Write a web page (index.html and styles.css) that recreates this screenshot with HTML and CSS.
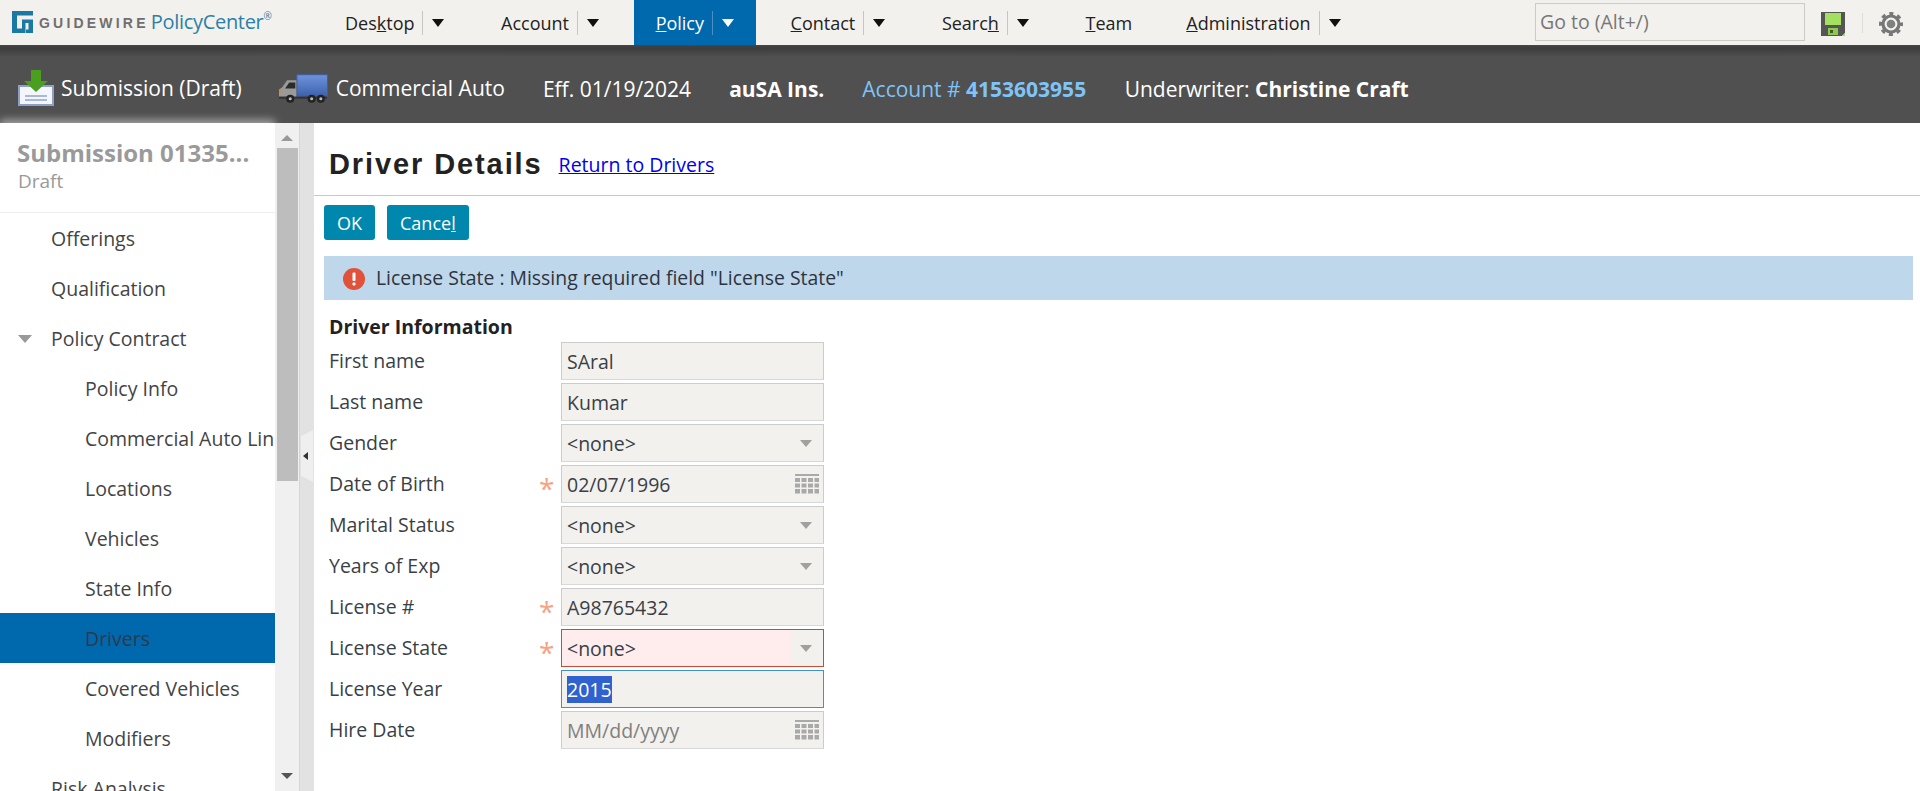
FILE: index.html
```html
<!DOCTYPE html>
<html lang="en">
<head>
<meta charset="utf-8">
<title>Driver Details</title>
<link rel="stylesheet" href="styles.css">
</head>
<body>
<header class="topbar">
  <div class="logo">
    <svg class="logo-mark" viewBox="0 0 21 22" width="21" height="22"><path fill="#1a7aa3" d="M0 0h21v4.500H5v13h5V8.500h11V22h-7v-3.500h2.500v-6.500h-3V22H0z"/></svg>
    <span class="logo-word">GUIDEWIRE</span>
    <span class="logo-product">PolicyCenter<sup class="logo-reg">&#174;</sup></span>
  </div>
  <nav class="nav">
    <div class="nav-item"><span class="nav-label">Des<u>k</u>top</span><span class="nav-sep"></span><span class="nav-caret"></span></div>
    <div class="nav-item"><span class="nav-label">Account</span><span class="nav-sep"></span><span class="nav-caret"></span></div>
    <div class="nav-item is-active"><span class="nav-label"><u>P</u>olicy</span><span class="nav-sep"></span><span class="nav-caret"></span></div>
    <div class="nav-item"><span class="nav-label"><u>C</u>ontact</span><span class="nav-sep"></span><span class="nav-caret"></span></div>
    <div class="nav-item"><span class="nav-label">Searc<u>h</u></span><span class="nav-sep"></span><span class="nav-caret"></span></div>
    <div class="nav-item nav-team"><span class="nav-label"><u>T</u>eam</span></div>
    <div class="nav-item"><span class="nav-label"><u>A</u>dministration</span><span class="nav-sep"></span><span class="nav-caret"></span></div>
  </nav>
  <div class="tools">
    <div class="goto">Go to (Alt+/)</div>
    <svg class="save" viewBox="0 0 24 24" width="24" height="24"><path fill="#555" d="M0 0h24v21l-3 3H0z"/><path fill="#a4e060" d="M21 24l3-3v3z"/><rect x="4" y="1" width="16" height="12" fill="#a4e060"/><rect x="7" y="16" width="10" height="7" fill="#8cc850"/><rect x="9" y="18" width="3" height="3" fill="#44582c"/></svg>
    <span class="tool-sep"></span>
    <svg class="gear" viewBox="0 0 24 24" width="24" height="24"><circle cx="12" cy="12" r="10.500" fill="none" stroke="#777" stroke-width="3" stroke-dasharray="4.120 4.130" stroke-dashoffset="2.060"/><circle cx="12" cy="12" r="8" fill="none" stroke="#777" stroke-width="3.200"/><circle cx="12" cy="12" r="4.300" fill="#808080"/></svg>
  </div>
</header>
<section class="infobar">
  <div class="info-item info-sub">
    <svg class="sub-icon" viewBox="0 0 36 36" width="36" height="36"><path fill="#f4f6fb" stroke="#8d9fc4" stroke-width="2" d="M1 16h34v19H1z"/><path fill="#4aa01e" d="M13 0h10v11h7L18 22 6 11h7z"/><path stroke="#a9b8d6" stroke-width="2" d="M7 26h22M7 30h22"/></svg>
    <span class="sub-text">Submission (Draft)</span>
  </div>
  <div class="info-item info-auto">
    <svg class="truck" viewBox="0 0 48 28" width="49" height="29"><defs><linearGradient id="box" x1="0" y1="0" x2="0" y2="1"><stop offset="0" stop-color="#6f94dc"/><stop offset="1" stop-color="#3d61ae"/></linearGradient></defs><rect x="17.500" y="0.500" width="30" height="21" fill="url(#box)" stroke="#3f5f9f"/><path fill="#9a9a9a" d="M17 6H8l-5 7-3 2v7h17z"/><path fill="#2b2b2b" d="M10 8h6v6H6z"/><rect x="0" y="15" width="2" height="3" fill="#d98a2b"/><rect y="22" x="0" width="47" height="2" fill="#333"/><circle cx="11" cy="24" r="4" fill="#222"/><circle cx="11" cy="24" r="1.500" fill="#bbb"/><circle cx="32" cy="24" r="4" fill="#222"/><circle cx="32" cy="24" r="1.500" fill="#bbb"/><circle cx="41" cy="24" r="4" fill="#222"/><circle cx="41" cy="24" r="1.500" fill="#bbb"/></svg>
    <span class="auto-text">Commercial Auto</span>
  </div>
  <div class="info-item info-eff">Eff. 01/19/2024</div>
  <div class="info-item info-org"><b>auSA Ins.</b></div>
  <div class="info-item info-acct">Account # <b>4153603955</b></div>
  <div class="info-item info-uw">Underwriter: <b>Christine Craft</b></div>
</section>
<main class="main">
  <aside class="sidebar">
    <div class="side-head">
      <div class="side-title">Submission 01335...</div>
      <div class="side-sub">Draft</div>
    </div>
    <ul class="side-list">
      <li class="side-item">Offerings</li>
      <li class="side-item">Qualification</li>
      <li class="side-item has-caret">Policy Contract</li>
      <li class="side-item sub">Policy Info</li>
      <li class="side-item sub">Commercial Auto Line</li>
      <li class="side-item sub">Locations</li>
      <li class="side-item sub">Vehicles</li>
      <li class="side-item sub">State Info</li>
      <li class="side-item sub is-current">Drivers</li>
      <li class="side-item sub">Covered Vehicles</li>
      <li class="side-item sub">Modifiers</li>
      <li class="side-item">Risk Analysis</li>
    </ul>
  </aside>
  <div class="scrollbar">
    <span class="sb-up"></span>
    <span class="sb-thumb"></span>
    <span class="sb-down"></span>
  </div>
  <div class="splitter"><span class="split-handle"></span><span class="split-arrow"></span></div>
  <div class="content">
    <div class="title-row">
      <h1 class="page-title">Driver Details</h1>
      <a class="return-link" href="#">Return to Drivers</a>
    </div>
    <div class="actions">
      <button class="btn" type="button">OK</button>
      <button class="btn" type="button">Cance<u>l</u></button>
    </div>
    <div class="alert">
      <svg class="alert-icon" viewBox="0 0 22 22" width="22" height="22"><circle cx="11" cy="11" r="11" fill="#e0523a"/><rect x="9.500" y="4.500" width="3" height="8.500" rx="1" fill="#fff"/><rect x="9.500" y="14.500" width="3" height="3" rx="1" fill="#fff"/></svg>
      <span class="alert-text">License State : Missing required field "License State"</span>
    </div>
    <h2 class="section-title">Driver Information</h2>
    <div class="form">
      <div class="row"><span class="lbl">First name</span><span class="req"></span><div class="field"><span>SAral</span></div></div>
      <div class="row"><span class="lbl">Last name</span><span class="req"></span><div class="field"><span>Kumar</span></div></div>
      <div class="row"><span class="lbl">Gender</span><span class="req"></span><div class="field"><span>&lt;none&gt;</span><span class="sel-caret"></span></div></div>
      <div class="row"><span class="lbl">Date of Birth</span><span class="req">*</span><div class="field"><span>02/07/1996</span><svg class="cal" viewBox="0 0 24 21" width="24" height="21"><path fill="#a9a9a9" d="M0 0h24v2H0zM0 4h5v4H0zM6.500 4h5v4h-5zM13 4h5v4h-5zM19.500 4H24v4h-4.500zM0 9.500h5v4H0zM6.500 9.500h5v4h-5zM13 9.500h5v4h-5zM19.500 9.500H24v4h-4.500zM0 15h5v4.500H0zM6.500 15h5v4.500h-5zM13 15h5v4.500h-5zM19.500 15H24v4.500h-4.500z"/></svg></div></div>
      <div class="row"><span class="lbl">Marital Status</span><span class="req"></span><div class="field"><span>&lt;none&gt;</span><span class="sel-caret"></span></div></div>
      <div class="row"><span class="lbl">Years of Exp</span><span class="req"></span><div class="field"><span>&lt;none&gt;</span><span class="sel-caret"></span></div></div>
      <div class="row"><span class="lbl">License #</span><span class="req">*</span><div class="field"><span>A98765432</span></div></div>
      <div class="row"><span class="lbl">License State</span><span class="req">*</span><div class="field is-error"><span class="err-fill">&lt;none&gt;</span><span class="sel-caret"></span></div></div>
      <div class="row"><span class="lbl">License Year</span><span class="req"></span><div class="field is-focus"><span class="selected">2015</span></div></div>
      <div class="row"><span class="lbl">Hire Date</span><span class="req"></span><div class="field is-empty"><span>MM/dd/yyyy</span><svg class="cal" viewBox="0 0 24 21" width="24" height="21"><path fill="#a9a9a9" d="M0 0h24v2H0zM0 4h5v4H0zM6.500 4h5v4h-5zM13 4h5v4h-5zM19.500 4H24v4h-4.500zM0 9.500h5v4H0zM6.500 9.500h5v4h-5zM13 9.500h5v4h-5zM19.500 9.500H24v4h-4.500zM0 15h5v4.500H0zM6.500 15h5v4.500h-5zM13 15h5v4.500h-5zM19.500 15H24v4.500h-4.500z"/></svg></div></div>
    </div>
  </div>
</main>
</body>
</html>
```
FILE: styles.css
```css
* { box-sizing: border-box; }
html, body { margin: 0; height: 100%; overflow: hidden; }
body { font-family: "Open Sans", sans-serif; font-size: 19.500px; color: #333; background: #fff; display: flex; flex-direction: column; height: 791px; }

.topbar { height: 45px; background: #f3f1ed; display: flex; align-items: stretch; flex: none; }
.logo { width: 322px; padding-left: 12px; display: flex; align-items: center; flex: none; }
.logo-mark { flex: none; margin-top: -1px; }
.logo-word { font-family: "Liberation Sans", sans-serif; font-weight: 700; font-size: 14px; letter-spacing: 3.200px; color: #6f6f6f; margin-left: 6px; }
.logo-product { font-size: 20px; color: #2b80a6; margin-left: 2px; letter-spacing: -.3px; margin-top: -2px; white-space: nowrap; }
.logo-reg { font-size: 10px; vertical-align: 9px; line-height: 0; }
.nav { display: flex; gap: 10.600px; align-items: stretch; }
.nav-item { display: flex; align-items: center; padding: 0 23px; color: #222; font-size: 18px; }
.nav-team { margin-right: -2.500px; }
.nav-sep { width: 1px; height: 24px; background: #c5c5c5; margin: 0 9px 0 8px; }
.nav-caret { width: 0; height: 0; border-left: 6px solid transparent; border-right: 6px solid transparent; border-top: 8px solid #111; }
.is-active { background: #0068ad; color: #fff; padding: 0 22px; margin: 0 1px; }
.is-active .nav-sep { background: #4c8fc0; }
.is-active .nav-caret { border-top-color: #fff; }
.tools { margin-left: auto; display: flex; align-items: center; padding-right: 17px; }
.goto { width: 270px; height: 38px; border: 1px solid #cdcbc6; line-height: 36px; padding-left: 4px; color: #777; margin-top: -1px; }
.save { margin-left: 16px; margin-top: 3px; }
.tool-sep { width: 1px; height: 20px; background: #dedcd8; margin: 0 16px 0 17px; }
.gear { flex: none; margin-top: 3px; }

.infobar { height: 78px; flex: none; background: linear-gradient(#474747 0, #3c3c3c 3px, #505050 12px); color: #fff; display: flex; align-items: center; font-size: 21px; padding-top: 10px; }
.info-item { display: flex; align-items: center; white-space: pre; }
.info-sub { margin-left: 18px; }
.sub-icon { margin: -2px 7px 0 0; }
.sub-text { margin-top: -3px; }
.info-auto { margin-left: 37px; }
.truck { margin: -2px 8px 0 0; }
.auto-text { margin-top: -2px; }
.info-eff { margin-left: 38px; }
.info-org { margin-left: 38px; }
.info-acct { margin-left: 38px; color: #7fc4f7; }
.info-uw { margin-left: 38.500px; }

.main { flex: 1; min-height: 0; display: flex; }
.sidebar { width: 275px; flex: none; overflow: hidden; background: #fff; position: relative; box-shadow: 0 -3px 8px rgba(255,255,255,.5); }
.side-head { height: 90px; border-bottom: 1px solid #eee; padding: 16px 0 0 17px; }
.side-title { font-size: 24px; font-weight: 700; color: #9a9a9a; line-height: 28px; white-space: nowrap; }
.side-sub { font-size: 19px; color: #9a9a9a; line-height: 28px; padding-left: 1px; }
.side-list { list-style: none; margin: 0; padding: 0; }
.side-item { height: 50px; line-height: 52px; padding-left: 51px; color: #444; white-space: nowrap; position: relative; }
.side-item.sub { padding-left: 85px; }
.has-caret::before { content: ""; position: absolute; left: 18px; top: 22px; width: 0; height: 0; border-left: 7px solid transparent; border-right: 7px solid transparent; border-top: 8px solid #999; }
.is-current { background: #0068ad; color: #2d3a48; }

.scrollbar { width: 24px; flex: none; background: #f0f0f0; position: relative; display: flex; flex-direction: column; align-items: center; }
.sb-up { flex: none; margin: 12px 0 7px; width: 0; height: 0; border-left: 6px solid transparent; border-right: 6px solid transparent; border-bottom: 6px solid #999; }
.sb-thumb { width: 21px; height: 333px; background: #bdbdbd; flex: none; }
.sb-down { margin-top: auto; margin-bottom: 12px; width: 0; height: 0; border-left: 6px solid transparent; border-right: 6px solid transparent; border-top: 6px solid #555; }
.splitter { width: 15px; flex: none; background: #e2e2e2; border-left: 1px solid #d6d6d6; position: relative; }
.split-handle { position: absolute; left: 1px; top: 307px; width: 12px; height: 52px; background: #efefef; clip-path: polygon(0 12%, 100% 0, 100% 100%, 0 88%); }
.split-arrow { position: absolute; left: 3px; top: 329px; width: 0; height: 0; border-top: 4px solid transparent; border-bottom: 4px solid transparent; border-right: 5px solid #333; }

.content { flex: 1; min-width: 0; }
.title-row { height: 73px; border-bottom: 1px solid #c8c8c8; padding: 11px 0 0 15px; display: flex; align-items: center; }
.page-title { font-family: "Liberation Sans", sans-serif; font-size: 29px; font-weight: 700; letter-spacing: 1.900px; color: #222; margin: 0 16px 0 0; }
.return-link { color: #00e; }
.actions { display: flex; gap: 12px; padding: 9px 0 0 10px; }
.btn { height: 35px; padding: 0 13px; border: 0; border-radius: 3px; background: #0087ae; color: #fff; font: 18px "Open Sans", sans-serif; }
.alert { margin: 16px 7px 0 10px; height: 44px; background: #bfd7ea; display: flex; align-items: center; padding-left: 19px; gap: 11px; color: #2d3440; }
.alert-icon { flex: none; margin-top: 2px; }
.alert-text { font-size: 19.400px; margin-top: -2px; }
.section-title { font-size: 19.500px; font-weight: 700; color: #222; margin: 15px 0 0 15px; line-height: 24px; }
.form { padding: 3px 0 0 15px; display: flex; flex-direction: column; gap: 3px; }
.row { display: flex; height: 38px; align-items: center; }
.lbl { width: 210px; flex: none; line-height: 36px; color: #3a3f47; }
.req { width: 22px; flex: none; color: #f7a284; font-size: 28px; line-height: 1; padding-top: 8px; }
.field { width: 263px; height: 38px; border: 1px solid #ccc; border-bottom-color: #d8d8d8; background: #f3f1ed; padding: 1px 0 0 5px; position: relative; display: flex; align-items: center; color: #3a3f47; white-space: pre; }
.sel-caret { position: absolute; right: 11px; top: 15px; width: 0; height: 0; border-left: 6.500px solid transparent; border-right: 6.500px solid transparent; border-top: 7px solid #a0a0a0; }
.cal { position: absolute; right: 4px; top: 8px; }
.is-empty { color: #808080; }
.is-error { border: 1px solid #cf4a34; padding: 0; }
.err-fill { background: #ffecec; display: block; width: 229px; height: 36px; padding: 1px 0 0 5px; line-height: 36px; }
.is-focus { border: 1px solid #3f91d0; }
.selected { background: #2f62cf; color: #fff; line-height: 27px; }
```
